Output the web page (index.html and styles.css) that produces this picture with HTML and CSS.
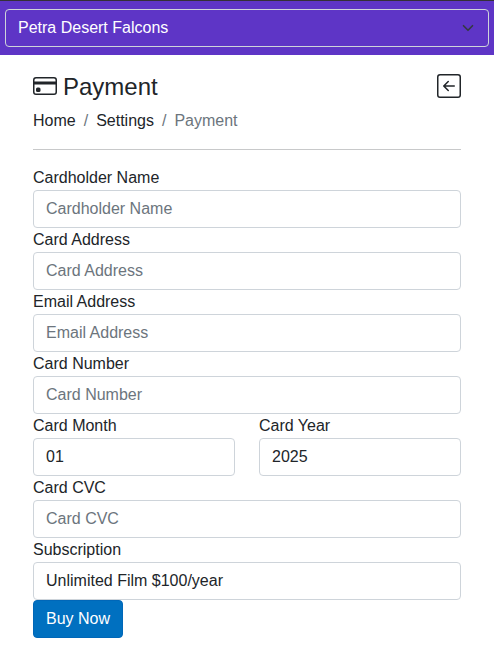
FILE: index.html
```
<!DOCTYPE html>
<html lang="en">
<head>
<meta charset="utf-8">
<title>Payment</title>
<link rel="stylesheet" href="styles.css">
</head>
<body>
<header class="topbar">
  <div class="team-select">
    <span>Petra Desert Falcons</span>
    <svg width="16" height="12" viewBox="0 0 16 16" fill="none" stroke="#343a40" stroke-width="2.2" stroke-linecap="round" stroke-linejoin="round"><path d="m2 5 6 6 6-6"/></svg>
  </div>
</header>
<main class="page">
  <div class="title-row">
    <h1 class="title">
      <svg width="24" height="24" viewBox="0 0 16 16" fill="currentColor"><path d="M0 4a2 2 0 0 1 2-2h12a2 2 0 0 1 2 2v8a2 2 0 0 1-2 2H2a2 2 0 0 1-2-2V4zm2-1a1 1 0 0 0-1 1v1h14V4a1 1 0 0 0-1-1H2zm13 4H1v5a1 1 0 0 0 1 1h12a1 1 0 0 0 1-1V7z"/><path d="M2 10a1 1 0 0 1 1-1h1a1 1 0 0 1 1 1v1a1 1 0 0 1-1 1H3a1 1 0 0 1-1-1v-1z"/></svg>
      <span>Payment</span>
    </h1>
    <a class="back" aria-label="Back"><svg width="24" height="24" viewBox="0 0 16 16" fill="currentColor"><path fill-rule="evenodd" d="M15 2a1 1 0 0 0-1-1H2a1 1 0 0 0-1 1v12a1 1 0 0 0 1 1h12a1 1 0 0 0 1-1V2zM0 2a2 2 0 0 1 2-2h12a2 2 0 0 1 2 2v12a2 2 0 0 1-2 2H2a2 2 0 0 1-2-2V2zm11.5 5.500a.5.5 0 0 1 0 1H5.707l2.147 2.146a.5.5 0 0 1-.708.708l-3-3a.5.5 0 0 1 0-.708l3-3a.5.5 0 1 1 .708.708L5.707 7.500H11.500z"/></svg></a>
  </div>
  <nav class="breadcrumb"><a>Home</a><i>/</i><a>Settings</a><i>/</i><span>Payment</span></nav>
  <hr>
  <form class="form">
    <label>Cardholder Name<input class="control" placeholder="Cardholder Name"></label>
    <label>Card Address<input class="control" placeholder="Card Address"></label>
    <label>Email Address<input class="control" placeholder="Email Address"></label>
    <label>Card Number<input class="control" placeholder="Card Number"></label>
    <div class="split">
      <label>Card Month<select class="control"><option>01</option></select></label>
      <label>Card Year<select class="control"><option>2025</option></select></label>
    </div>
    <label>Card CVC<input class="control" placeholder="Card CVC"></label>
    <label>Subscription<select class="control"><option>Unlimited Film $100/year</option></select></label>
    <button class="buy" type="button">Buy Now</button>
  </form>
</main>
</body>
</html>
```
FILE: styles.css
```
* { box-sizing: border-box; }
body {
  margin: 0;
  background: #fff;
  color: #212529;
  font: 16px/24px "Liberation Sans", Arial, sans-serif;
}
.topbar {
  height: 55px;
  padding: 8px 5px;
  border-top: 1px solid #343038;
  background: #5e35c6;
}
.team-select {
  display: flex;
  align-items: center;
  justify-content: space-between;
  height: 38px;
  padding: 0 12px;
  border: 1px solid #ced4da;
  border-radius: 4px;
  color: #fff;
}
.page { padding: 17px 33px 0; }
.title-row {
  display: flex;
  align-items: center;
  justify-content: space-between;
  height: 29px;
}
.title {
  display: flex;
  align-items: center;
  gap: 6px;
  margin: 0;
  font-size: 24px;
  font-weight: 400;
  line-height: 29px;
}
.title-row svg { margin-bottom: 1px; }
.back { display: flex; }
.breadcrumb { display: flex; gap: 8px; margin-top: 8px; }
.breadcrumb i { font-style: normal; color: #6c757d; }
.breadcrumb span { color: #6c757d; }
hr {
  height: 1px;
  margin: 16px 0;
  border: 0;
  background: #c8c9ca;
}
.form label { display: block; }
.control {
  display: block;
  width: 100%;
  height: 38px;
  margin: 0;
  padding: 6px 12px;
  border: 1px solid #ced4da;
  border-radius: 4px;
  background: #fff;
  color: #212529;
  font: inherit;
  appearance: none;
}
.control::placeholder { color: #6c757d; opacity: 1; }
.split { display: grid; grid-template-columns: 1fr 1fr; gap: 24px; }
.buy {
  display: block;
  height: 38px;
  padding: 6px 12px;
  border: 1px solid #0067b8;
  border-radius: 4px;
  background: #0070c0;
  color: #fff;
  font: inherit;
}
```
